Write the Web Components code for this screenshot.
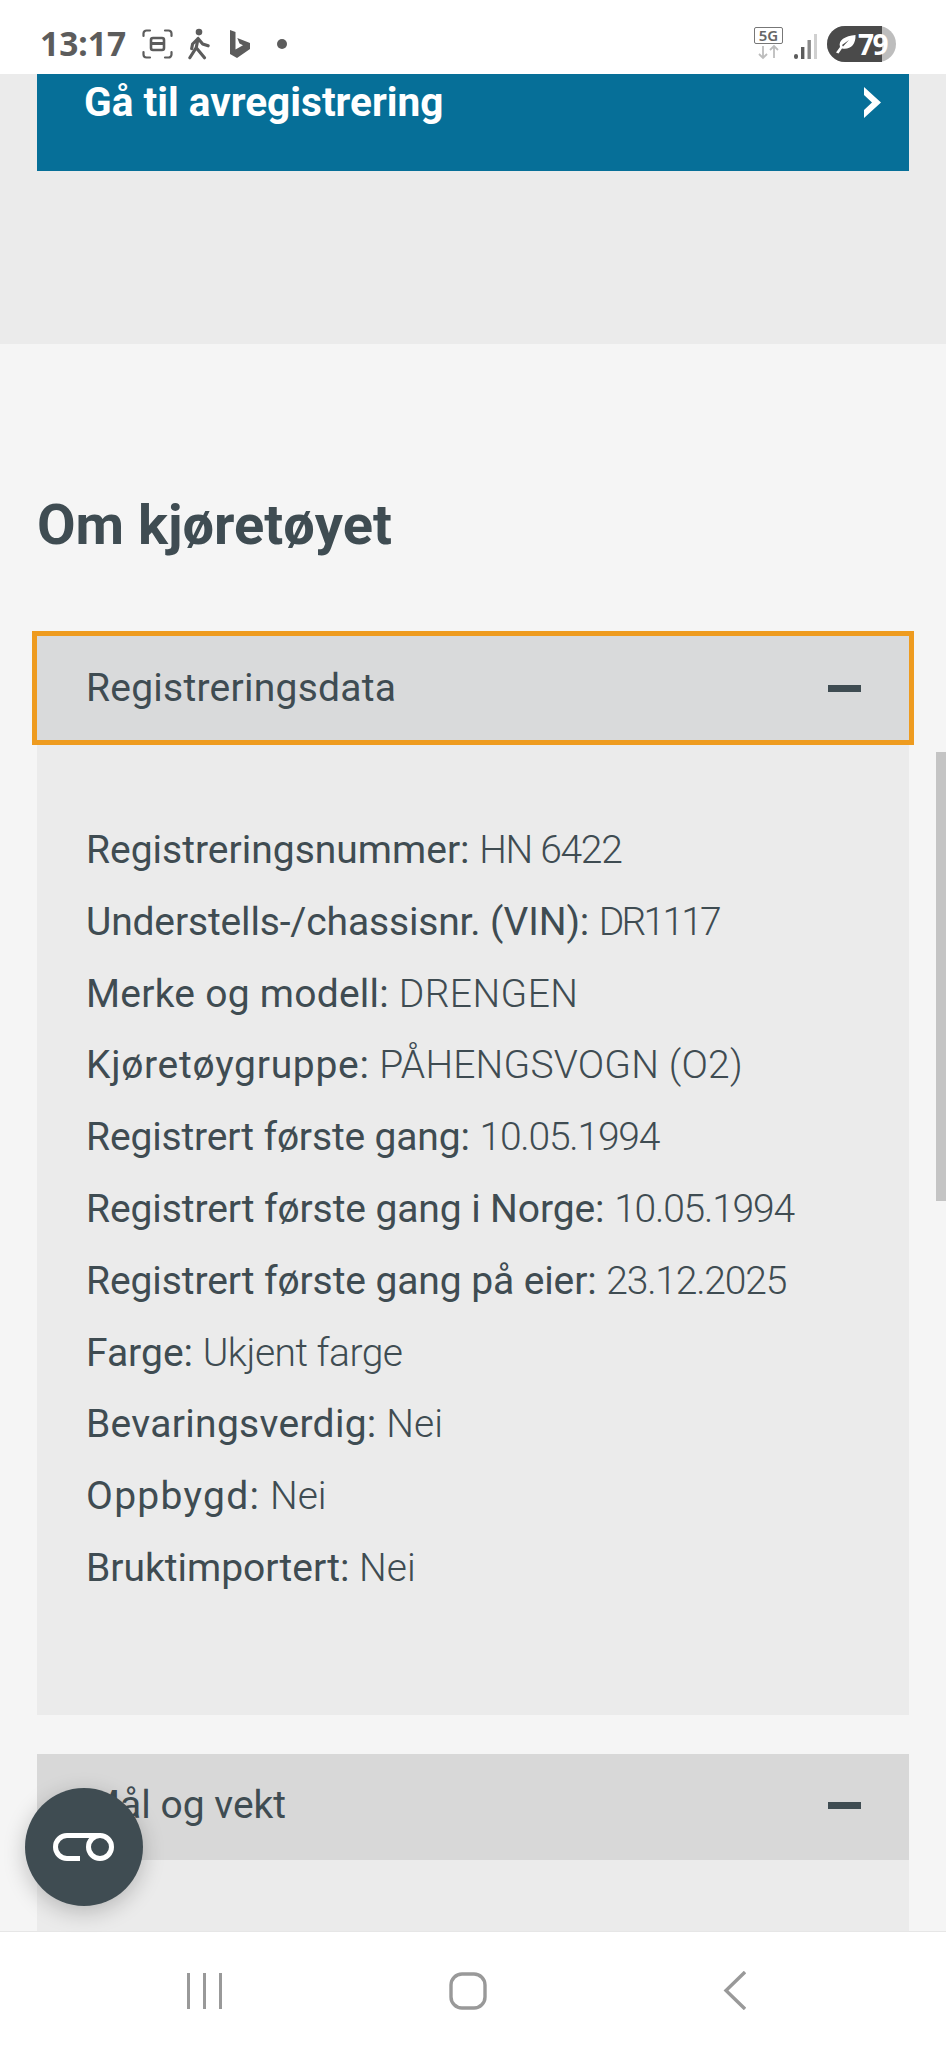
<!DOCTYPE html>
<html lang="no">
<head>
<meta charset="utf-8">
<title>Om kjøretøyet</title>
<style>
    html, body { margin: 0; height: 100%; overflow: hidden; background: #f5f5f5; }
    body { font-family: Roboto, "Noto Sans", sans-serif; color: #3f4c52; }
</style>
</head>
<body>
<app-screen>
    <status-bar slot="top"></status-bar>
    <action-band>Gå til avregistrering</action-band>
    <section-heading>Om kjøretøyet</section-heading>
    <accordion-panel title="Registreringsdata" focused>
        <data-row label="Registreringsnummer:" tracking="-1.3px">HN 6422</data-row>
        <data-row label="Understells-/chassisnr. (VIN):" label-tracking="-0.15px" tracking="-2.8px">DR1117</data-row>
        <data-row label="Merke og modell:" label-tracking="0.25px" tracking="0.4px">DRENGEN</data-row>
        <data-row label="Kjøretøygruppe:" label-tracking="0.7px" tracking="0.2px">PÅHENGSVOGN (O2)</data-row>
        <data-row label="Registrert første gang:" label-tracking="-0.15px" tracking="-1.2px">10.05.1994</data-row>
        <data-row label="Registrert første gang i Norge:" label-tracking="-0.1px" tracking="-1.2px">10.05.1994</data-row>
        <data-row label="Registrert første gang på eier:" label-tracking="-0.1px" tracking="-1.2px">23.12.2025</data-row>
        <data-row label="Farge:" tracking="-0.5px">Ukjent farge</data-row>
        <data-row label="Bevaringsverdig:" label-tracking="0.3px">Nei</data-row>
        <data-row label="Oppbygd:" label-tracking="1.3px">Nei</data-row>
        <data-row label="Bruktimportert:">Nei</data-row>
    </accordion-panel>
    <accordion-panel title="Mål og vekt"></accordion-panel>
    <nav-bar slot="bottom"></nav-bar>
</app-screen>

<script>
class AppScreen extends HTMLElement {
    constructor() {
        super();
        this.attachShadow({ mode: "open" });
        this.shadowRoot.innerHTML = `
        <style>
            :host { display: flex; flex-direction: column; height: 2049px; position: relative; overflow: hidden; }
            .content { flex: 1; min-height: 0; overflow: hidden; background: #f5f5f5; }
            .scrollbar { position: absolute; right: 0; top: 752px; width: 10px; height: 449px; background: #c4c4c4; }
            .fab { position: absolute; left: 25px; top: 1788px; width: 118px; height: 118px; border-radius: 50%;
                background: #3f4c52; box-shadow: 0 6px 22px rgba(0,0,0,.22); display: flex; align-items: center; justify-content: center; }
        </style>
        <slot name="top"></slot>
        <div class="content"><slot></slot></div>
        <slot name="bottom"></slot>
        <div class="scrollbar"></div>
        <div class="fab">
            <svg width="62" height="28" viewBox="0 0 62 28" fill="none" stroke="#fff" stroke-width="5">
                <path d="M27 25.500H14a11.500 11.500 0 0 1 0-23h34"/>
                <circle cx="47" cy="14" r="11.500"/>
            </svg>
        </div>`;
    }
}
customElements.define("app-screen", AppScreen);

class StatusBar extends HTMLElement {
    constructor() {
        super();
        this.attachShadow({ mode: "open" });
        this.shadowRoot.innerHTML = `
        <style>
            :host { display: flex; align-items: center; height: 74px; background: #fff; padding: 14px 50px 0 40px; box-sizing: border-box;
                font-family: "Noto Sans", sans-serif; color: #5c5c5c; }
            .time { width: 102px; font-size: 33.500px; font-weight: 700; line-height: 1; }
            .left { display: flex; align-items: center; }
            .right { margin-left: auto; display: flex; align-items: center; }
            .net { display: flex; flex-direction: column; align-items: center; width: 29px; margin-top: -1px; }
            .g5 { width: 29px; height: 17px; box-sizing: border-box; border: 1.500px solid #777; border-radius: 2px;
                font-size: 15px; font-weight: 600; line-height: 14px; text-align: center; color: #666; }
            .batt { position: relative; width: 69px; height: 36px; border-radius: 18px; background: #bdbdbd;
                color: #fff; font-weight: 700; font-size: 28px; line-height: 36px; }
            .fill { position: absolute; left: 0; top: 0; bottom: 0; width: 55px; background: #4a4a4a; border-radius: 18px 0 0 18px; }
            .num { position: absolute; left: 31px; top: 0; letter-spacing: -1.500px; }
            .leaf { position: absolute; left: 8px; top: 8px; }
        </style>
        <div class="left">
            <span class="time">13:17</span>
            <svg width="31" height="30" viewBox="0 0 31 30" fill="none" stroke="#5c5c5c" stroke-width="2.200" stroke-linecap="round">
                <path d="M1.500 7V4.500a3 3 0 0 1 3-3H8M23 1.500h3.500a3 3 0 0 1 3 3V7M29.500 23v2.500a3 3 0 0 1-3 3H23M8 28.500H4.500a3 3 0 0 1-3-3V23"/>
                <rect x="9" y="9" width="13" height="12" rx="2" stroke-width="2.600"/>
                <path d="M10 13h11v3H10z" fill="#5c5c5c" stroke="none"/>
            </svg>
            <svg width="22" height="34" viewBox="0 0 24 34" fill="none" stroke="#5c5c5c" stroke-width="3.400" stroke-linecap="round" stroke-linejoin="round" style="margin-left:15px">
                <circle cx="12" cy="4" r="3.600" fill="#5c5c5c" stroke="none"/>
                <path d="M11 11l-2 10-7 11M9 21l9 11M11 11l-6 6-1 5M11 11l5 6 6 2"/>
            </svg>
            <svg width="20" height="28" viewBox="0 0 20 28" style="margin-left:20px" fill="#5c5c5c">
                <path d="M0 0l5.500 2v17.500l7.500-4.300-3.500-1.700-2.200-5.500L20 13v6L7 28l-7-4z"/>
            </svg>
            <svg width="10" height="10" viewBox="0 0 10 10" style="margin-left:27px"><circle cx="5" cy="5" r="5" fill="#5c5c5c"/></svg>
        </div>
        <div class="right">
            <div class="net">
                <div class="g5">5G</div>
                <svg width="29" height="16" viewBox="0 0 29 16">
                    <path d="M9 2v12M5 10l4 4 4-4M20 14V2M16 6l4-4 4 4" fill="none" stroke="#bdbdbd" stroke-width="1.800"/>
                </svg>
            </div>
            <svg width="23" height="25" viewBox="0 0 23 25" style="margin:4px 10px 0 11px">
                <rect x="0" y="20" width="4" height="5" rx="2" fill="#5c5c5c"/>
                <rect x="7" y="13" width="3.400" height="12" fill="#5c5c5c"/>
                <rect x="13.500" y="6" width="3.400" height="19" fill="#8a8a8a"/>
                <rect x="20" y="0" width="3" height="25" fill="#d0d0d0"/>
            </svg>
            <div class="batt">
                <div class="fill"></div>
                <svg class="leaf" width="21" height="20" viewBox="0 0 21 20" fill="#fff">
                    <path d="M20.500 1C21 11 15 16 7 14.500L3.500 19.500 1 18.500 5 13C3 6 10 2 20.500 1zM8 12.500L14 6 7 11z"/>
                </svg>
                <span class="num">79</span>
            </div>
        </div>`;
    }
}
customElements.define("status-bar", StatusBar);

class ActionBand extends HTMLElement {
    constructor() {
        super();
        this.attachShadow({ mode: "open" });
        this.shadowRoot.innerHTML = `
        <style>
            :host { display: block; background: #ebebeb; padding: 0 37px 173px; }
            a { display: flex; align-items: flex-start; justify-content: space-between; background: #066f98; color: #fff;
                height: 97px; padding: 6px 28px 0 47px; box-sizing: border-box; font-size: 40.600px; font-weight: 700; line-height: 44px; }
            svg { margin-top: 7px; }
        </style>
        <a><slot></slot>
            <svg width="17" height="31" viewBox="0 0 17 31"><path d="M0 0l17 15.500L0 31V23l8-7.500L0 8z" fill="#fff"/></svg>
        </a>`;
    }
}
customElements.define("action-band", ActionBand);

class SectionHeading extends HTMLElement {
    constructor() {
        super();
        this.attachShadow({ mode: "open" });
        this.shadowRoot.innerHTML = `
        <style>
            :host { display: block; padding: 149px 37px 0; height: 292px; box-sizing: border-box; font-size: 56px; font-weight: 700; line-height: 64px; color: #3f4c52; }
        </style>
        <slot></slot>`;
    }
}
customElements.define("section-heading", SectionHeading);

class AccordionPanel extends HTMLElement {
    constructor() {
        super();
        this.attachShadow({ mode: "open" });
        const focused = this.hasAttribute("focused");
        this.shadowRoot.innerHTML = `
        <style>
            :host { display: block; margin: 0 37px 39px; background: #ebebeb; }
            .head { display: flex; align-items: center; justify-content: space-between; height: 106px; padding: 0 48px 0 49px;
                background: #d8d8d8; font-size: 39px; color: #3f4c52; box-sizing: border-box; }
            .head.focused { outline: 5px solid #ee9b1f; background: #d9dadb; height: 104px; margin-bottom: 2px; }
            .title { margin-top: -3px; }
            .dash { width: 33px; height: 7px; background: #3f4c52; margin-top: -2px; }
            .focused .title { margin-top: -1px; letter-spacing: 0.25px; }
            .focused .dash { margin-top: 0; }
            .body { padding: 73px 49px 110px; }
            .body.empty { padding: 0; height: 90px; }
        </style>
        <div class="head${focused ? " focused" : ""}"><span class="title"></span><span class="dash"></span></div>
        <div class="body${this.children.length ? "" : " empty"}"><slot></slot></div>`;
        this.shadowRoot.querySelector(".title").textContent = this.getAttribute("title");
    }
}
customElements.define("accordion-panel", AccordionPanel);

class DataRow extends HTMLElement {
    constructor() {
        super();
        this.attachShadow({ mode: "open" });
        this.shadowRoot.innerHTML = `
        <style>
            :host { display: block; height: 71.800px; font-size: 39px; line-height: 71.800px; white-space: nowrap; color: #3f4c52; }
            .value { font-weight: 300; }
        </style>
        <span class="label"></span> <span class="value"><slot></slot></span>`;
        const label = this.shadowRoot.querySelector(".label");
        label.textContent = this.getAttribute("label");
        label.style.letterSpacing = this.getAttribute("label-tracking") || "0";
        this.shadowRoot.querySelector(".value").style.letterSpacing = this.getAttribute("tracking") || "0";
    }
}
customElements.define("data-row", DataRow);

class NavBar extends HTMLElement {
    constructor() {
        super();
        this.attachShadow({ mode: "open" });
        this.shadowRoot.innerHTML = `
        <style>
            :host { display: flex; height: 118px; background: #fff; border-top: 1px solid #e6e6e6; box-sizing: border-box; align-items: center; padding: 0 0 0 187px; }
        </style>
        <svg width="35" height="36" viewBox="0 0 35 36" stroke="#999" stroke-width="3" fill="none"><path d="M1.500 0v36M17.500 0v36M33.500 0v36"/></svg>
        <svg width="38" height="38" viewBox="0 0 38 38" stroke="#999" stroke-width="3.400" fill="none" style="margin-left:227px"><rect x="2" y="2" width="34" height="34" rx="11"/></svg>
        <svg width="23" height="39" viewBox="0 0 23 39" stroke="#999" stroke-width="3.400" fill="none" style="margin-left:236px"><path d="M22 1L3 19.500 22 38"/></svg>`;
    }
}
customElements.define("nav-bar", NavBar);
</script>
</body>
</html>
